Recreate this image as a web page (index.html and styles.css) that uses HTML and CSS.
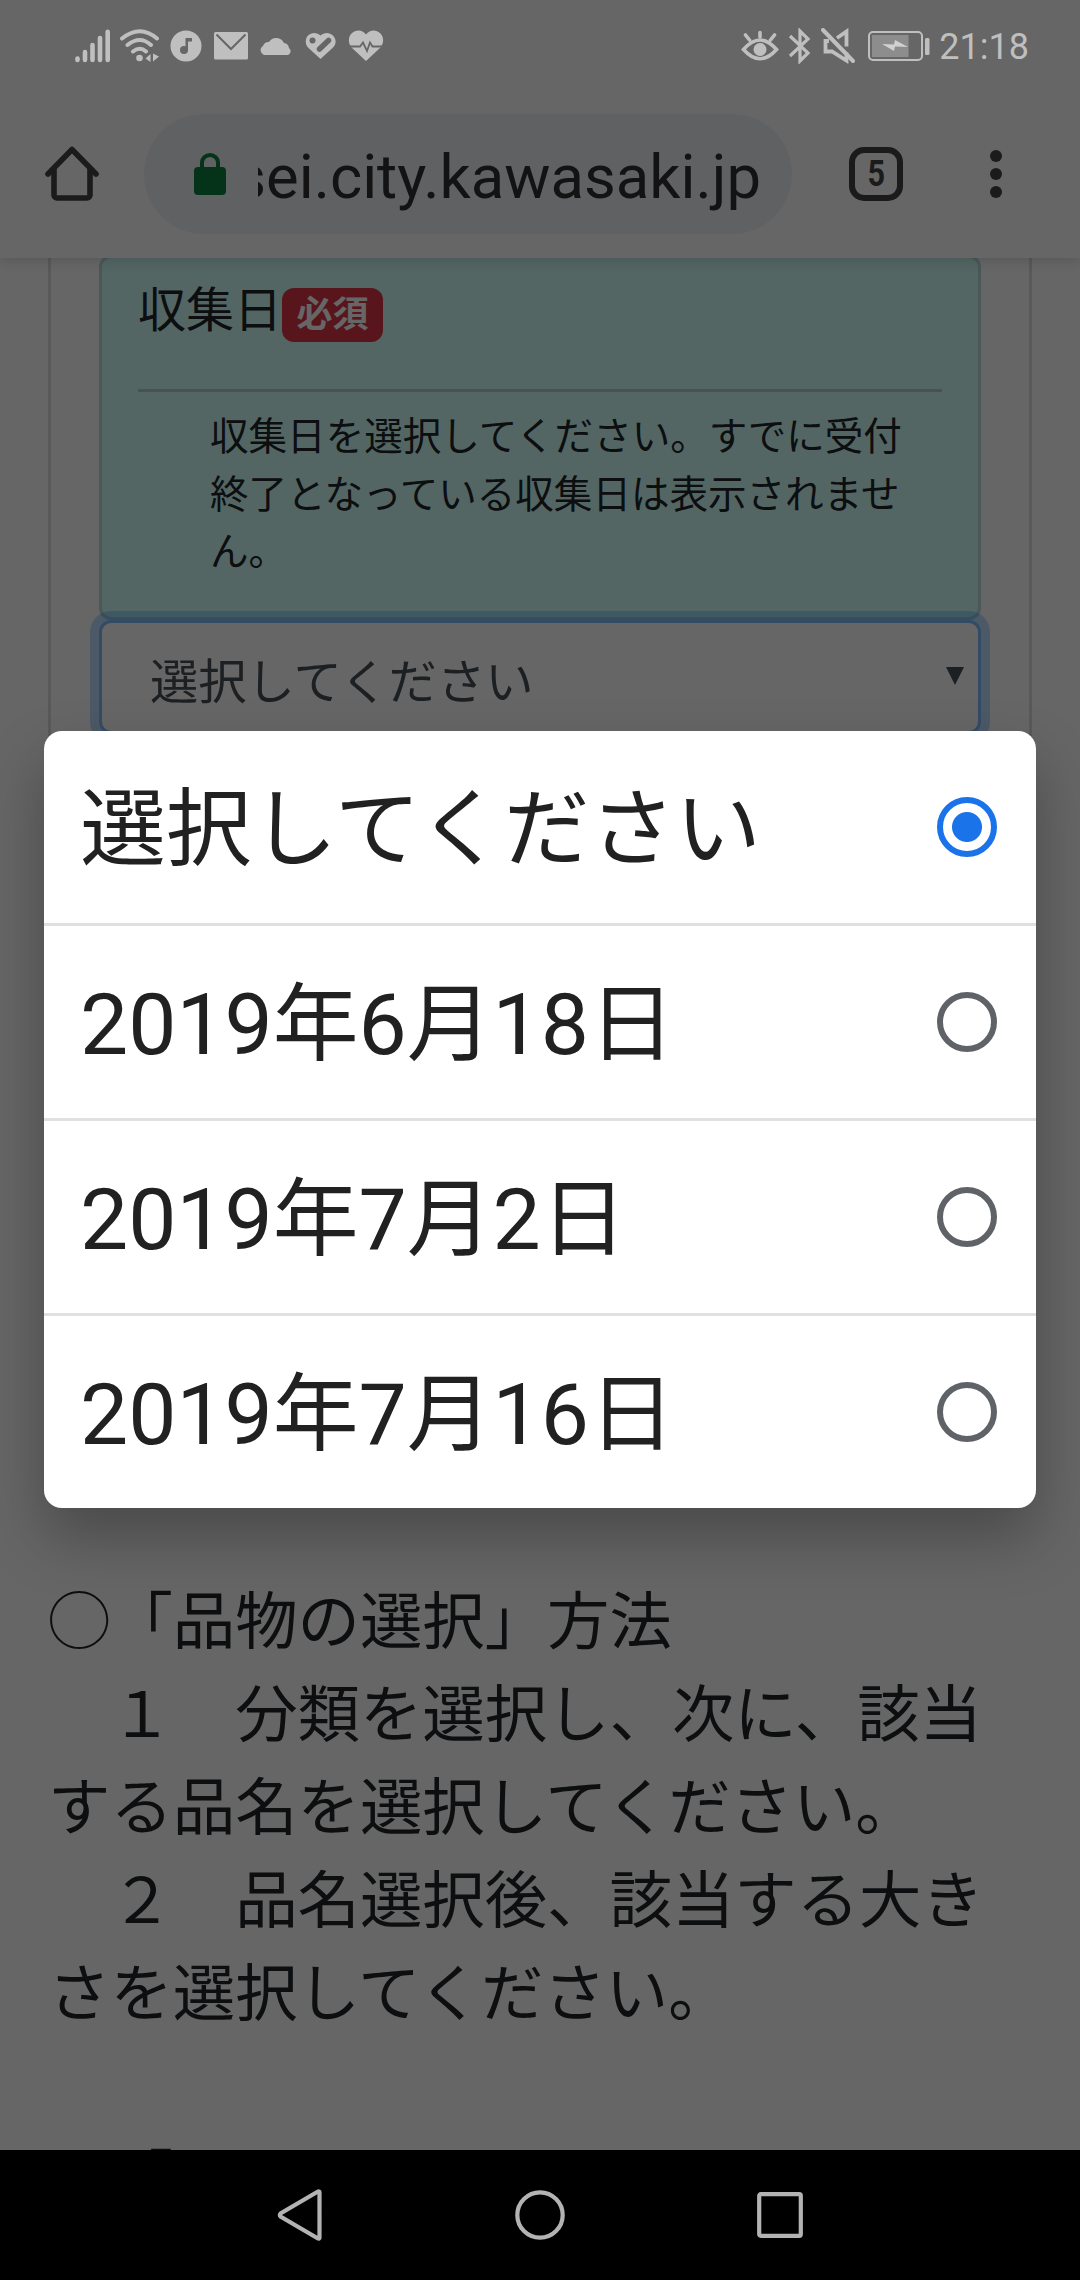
FILE: index.html
```html
<!DOCTYPE html>
<html lang="ja">
<head>
<meta charset="utf-8">
<title>収集日の選択</title>
<link rel="stylesheet" href="styles.css">
</head>
<body>
<div class="screen">
  <header class="status">
    <div class="status-left">
      <svg width="36" height="34" viewBox="0 0 36 34" stroke="currentColor" stroke-width="4.6" stroke-linecap="round"><path d="M2.5 29.500v1.500M10 23v8M17.500 16v15M25 9v22M32.700 2.800v28.200"/></svg>
      <svg width="40" height="34" viewBox="0 0 40 34" fill="none" stroke="currentColor" stroke-width="4" stroke-linecap="round"><path d="M2 9.500Q20 -5 37 9.500M7.500 16Q20 6 31 16M13 22.500Q20 17 26 22.500"/><circle cx="19.500" cy="29" r="3.300" fill="currentColor" stroke="none"/><path d="M30.500 25v8l-5-3.500zM33 24.500v8l6-5z" fill="currentColor" stroke="none"/></svg>
      <svg class="music" width="32" height="32" viewBox="0 0 32 32"><circle cx="16" cy="16" r="15.500" fill="currentColor"/><g fill="#666"><circle cx="14" cy="20" r="4"/><path d="M15.500 8h6.500v3.500h-4v9h-2.500z"/></g></svg>
      <svg class="mail" width="34" height="28" viewBox="0 0 34 28"><rect width="34" height="27.500" rx="1.500" fill="currentColor"/><path d="M2.500 2.500L17 17 31.500 2.500" fill="none" stroke="#666" stroke-width="2"/></svg>
      <svg class="cloud" width="34" height="20" viewBox="0 0 34 20"><path d="M5 19a5 5 0 0 1-1-9 6 6 0 0 1 6-4A8.500 8.500 0 0 1 25 7a6 6 0 0 1 5 5 4 4 0 0 1-1 7z" fill="currentColor"/></svg>
      <svg class="heart" width="32" height="28" viewBox="0 0 32 28"><path d="M15.500 27L3 15.500C0 12.500 0 6.500 3 3.500 6.500 0 12 0 15.500 3.500 19 0 24.500 0 28 3.500c3.500 3.500 3.500 9 0 12z" fill="currentColor"/><circle cx="7.500" cy="8.500" r="3" fill="#666"/><path d="M14.500 17l9-8.500" stroke="#666" stroke-width="5.500" stroke-linecap="round"/></svg>
      <svg class="pulse" width="36" height="32" viewBox="0 0 36 32"><path d="M18 31L3.500 17.500C0 13.500 0 7 3.500 3.500 8-.5 14-.5 18 4.500c4-5 10-5 14.500-1 3.500 3.500 3.500 10 0 14z" fill="currentColor"/><path d="M0 16.500h12l3-4 4 8.500 3-8.500 2.500 4H36" fill="none" stroke="#666" stroke-width="1.800"/></svg>
    </div>
    <div class="status-right">
      <svg width="38" height="34" viewBox="0 0 38 34" fill="none" stroke="currentColor" stroke-width="3.600" stroke-linecap="round"><path d="M2.500 20.500Q19 1.500 35.500 20.500 19 39 2.500 20.500z"/><path d="M19 8V3.500M8.500 11L4.500 6M29.500 11l4-5"/><circle cx="19" cy="20.500" r="6.500" fill="currentColor" stroke="none"/></svg>
      <svg class="bt" width="24" height="36" viewBox="0 0 24 36" fill="none" stroke="currentColor" stroke-width="3.200"><path d="M2 8l18 17-8 8V3l8 8L2 28"/></svg>
      <svg class="mute" width="34" height="36" viewBox="0 0 34 36" fill="none" stroke="currentColor" stroke-width="3.800"><path d="M2 2l30 31" stroke-width="4" stroke-linecap="round"/><path d="M8 13H4.500v10.500H11l14.500 9v-8M16 10l9.500-6.500v15"/></svg>
      <svg class="battery" width="62" height="32" viewBox="0 0 62 32"><rect x="1" y="2" width="53" height="28" rx="4" fill="none" stroke="currentColor" stroke-width="2"/><rect x="4" y="5" width="36.500" height="22" fill="#8d8d8d"/><path d="M14 14l12 .5 1-4.500 13 7-13-.5-1 4.500z" fill="#d0d0d0"/><rect x="57" y="8" width="4.500" height="17" rx="1.500" fill="currentColor"/></svg>
      <span class="clock">21:18</span>
    </div>
  </header>

  <div class="toolbar">
    <svg class="home" width="54" height="56" viewBox="0 0 54 56" fill="none" stroke="currentColor" stroke-width="5.600"><path d="M3 28L27 3.500 51 28" stroke-linecap="round" stroke-linejoin="round"/><path d="M9 22v27a3 3 0 0 0 3 3h30a3 3 0 0 0 3-3V22"/></svg>
    <div class="omnibox">
      <svg class="lock" width="32" height="42" viewBox="0 0 32 42"><rect y="14" width="32" height="28" rx="4" fill="currentColor"/><path d="M8 15V9.500a8 7.500 0 0 1 16 0V15" fill="none" stroke="currentColor" stroke-width="4"/></svg>
      <div class="url"><span>sei.city.kawasaki.jp</span></div>
    </div>
    <div class="tabs"><span>5</span></div>
    <svg class="more" width="12" height="48" viewBox="0 0 12 48" fill="currentColor"><circle cx="6" cy="6" r="6"/><circle cx="6" cy="24" r="6"/><circle cx="6" cy="42" r="6"/></svg>
  </div>

  <main class="page">
    <section class="form">
      <div class="card">
        <div class="card-title"><span>収集日</span><span class="badge">必須</span></div>
        <p class="help">収集日を選択してください。すでに受付終了となっている収集日は表示されません。</p>
      </div>
      <div class="select"><span>選択してください</span><svg width="18" height="18" viewBox="0 0 18 18"><path d="M0 0h18L9 18z" fill="currentColor"/></svg></div>
    </section>
    <div class="guide">
      <p>◯「品物の選択」方法</p>
      <p>　１　分類を選択し、次に、該当する品名を選択してください。</p>
      <p>　２　品名選択後、該当する大きさを選択してください。</p>
      <p class="next">　「</p>
    </div>
  </main>

  <div class="scrim"></div>

  <div class="dialog">
    <div class="option"><span>選択してください</span><i class="radio checked"></i></div>
    <div class="option"><span>2019年6月18日</span><i class="radio"></i></div>
    <div class="option"><span>2019年7月2日</span><i class="radio"></i></div>
    <div class="option"><span>2019年7月16日</span><i class="radio"></i></div>
  </div>

  <nav class="nav">
    <svg width="50" height="52" viewBox="0 0 50 52"><path d="M44.500 3.500v45a1 1 0 0 1-1.500 1L5.500 27.500a2 2 0 0 1 0-3L43 2.500a1 1 0 0 1 1.500 1z"/></svg>
    <svg width="50" height="50" viewBox="0 0 50 50"><circle cx="25" cy="25" r="22.700"/></svg>
    <svg width="50" height="50" viewBox="0 0 50 50"><rect x="4.200" y="4.200" width="41.600" height="41.600" rx="1.500"/></svg>
  </nav>
</div>
</body>
</html>
```
FILE: styles.css
```css
* { box-sizing: border-box; }
body { margin: 0; background: #fff; }
p { margin: 0; }
svg { display: block; flex: none; }

.screen {
  position: relative;
  display: flex;
  flex-direction: column;
  width: 1080px;
  height: 2280px;
  overflow: hidden;
  font-family: Roboto, "Noto Sans CJK JP", sans-serif;
}

/* Dimming layer behind the picker */
.scrim { position: absolute; inset: 0; background: rgba(0, 0, 0, .6); z-index: 1; }

/* Status bar */
.status {
  position: relative;
  z-index: 2;
  display: flex;
  justify-content: space-between;
  height: 90px;
  padding: 0 51px 0 75px;
  color: #bfbfbf;
}
.status-left, .status-right { display: flex; align-items: center; height: 91px; }
.status-left > :nth-child(2) { margin-left: 9px; }
.music { margin-left: 10px; }
.mail { margin-left: 12px; }
.cloud { margin-left: 11px; }
.heart { margin-left: 12px; }
.pulse { margin-left: 11px; }
.bt { margin-left: 9px; }
.mute { margin-left: 9px; }
.battery { margin-left: 13px; }
.clock { margin-left: 9px; font-size: 36px; line-height: 42px; padding-top: 3px; }

/* Browser toolbar */
.toolbar {
  position: relative;
  display: flex;
  align-items: center;
  height: 168px;
  padding: 0 78px 0 45px;
  background: #fff;
  color: #444;
  box-shadow: 0 0 16px rgba(0, 0, 0, .2);
  clip-path: inset(0 0 -30px 0);
}
.omnibox {
  display: flex;
  align-items: center;
  width: 648px;
  height: 120px;
  margin-left: 45px;
  padding: 0 31px 0 50px;
  border-radius: 60px;
  background: #f1f3f4;
}
.lock { color: #0b8043; }
.url {
  display: flex;
  justify-content: flex-end;
  flex: 1;
  margin-left: 32px;
  overflow: hidden;
  font-size: 61.600px;
  line-height: 80px;
  padding-top: 5px;
  white-space: nowrap;
  color: #303134;
}
.tabs {
  display: flex;
  align-items: center;
  justify-content: center;
  width: 54px;
  height: 54px;
  margin-left: 57px;
  border: 6px solid;
  border-radius: 15px;
}
.tabs span { font-size: 36px; font-weight: 700; line-height: 40px; transform: scaleX(.85); }
.more { margin-left: auto; }

/* Web page */
.page {
  flex: 1;
  min-height: 0;
  overflow: hidden;
  margin-top: -3px;
  padding: 0 48px;
  color: #212529;
  font-family: "Noto Sans CJK JP", sans-serif;
}
.form {
  height: 1145px;
  padding: 0 48px;
  border: solid #dfdfdf;
  border-width: 0 3px;
}
.card {
  height: 365px;
  padding: 12px 36px 0;
  border: 3px solid #b8dcd8;
  border-radius: 12px;
  background: #cffff9;
}
.card-title {
  display: flex;
  align-items: flex-start;
  height: 122px;
  border-bottom: 3px solid #bcc8c8;
  font-size: 48px;
  line-height: 72px;
}
.badge {
  height: 54px;
  margin: 18px 0 0;
  padding: 0 14.400px;
  border-radius: 12px;
  background: #dc3545;
  color: #fff;
  font-size: 36px;
  font-weight: 700;
  line-height: 47px;
}
.help { padding: 13px 0 0 72px; font-size: 38.550px; line-height: 57.600px; width: 780px; }
.select {
  display: flex;
  align-items: center;
  justify-content: space-between;
  height: 114px;
  padding: 1px 14px 0 48px;
  border: 3px solid #80bdff;
  border-radius: 12px;
  background: #fff;
  box-shadow: 0 0 0 9px rgba(0, 123, 255, .25);
  color: #495057;
  font-size: 48.300px;
  line-height: 72px;
}
.select svg { margin-top: -3px; }
.guide {
  padding-top: 171px;
  font-size: 62.400px;
  line-height: 93px;
}
.next { margin-top: 93px; text-spacing-trim: space-all; font-kerning: none; }

/* Option picker */
.dialog {
  position: absolute;
  z-index: 3;
  top: 731px;
  left: 44px;
  width: 992px;
  border-radius: 18px;
  background: #fff;
  box-shadow: 0 30px 60px rgba(0, 0, 0, .28);
  color: #212121;
}
.option {
  display: flex;
  align-items: center;
  justify-content: space-between;
  height: 195px;
  padding: 0 39px 0 36px;
  border-bottom: 3px solid #e0e0e0;
  font-size: 85.770px;
  line-height: 120px;
}
.option span { padding-top: 6px; }
.option:last-child { height: 192px; border-bottom: 0; }
.radio {
  width: 60px;
  height: 60px;
  border: 6px solid #5f6368;
  border-radius: 50%;
}
.checked { border-color: #1a73e8; background: radial-gradient(circle, #1a73e8 14.500px, transparent 15.500px); }

/* System navigation */
.nav {
  position: relative;
  z-index: 2;
  display: flex;
  align-items: center;
  justify-content: center;
  gap: 190px;
  height: 130px;
  flex: none;
  background: #000;
}
.nav svg { fill: none; stroke: #b3b3b3; stroke-width: 4.200; }
```
